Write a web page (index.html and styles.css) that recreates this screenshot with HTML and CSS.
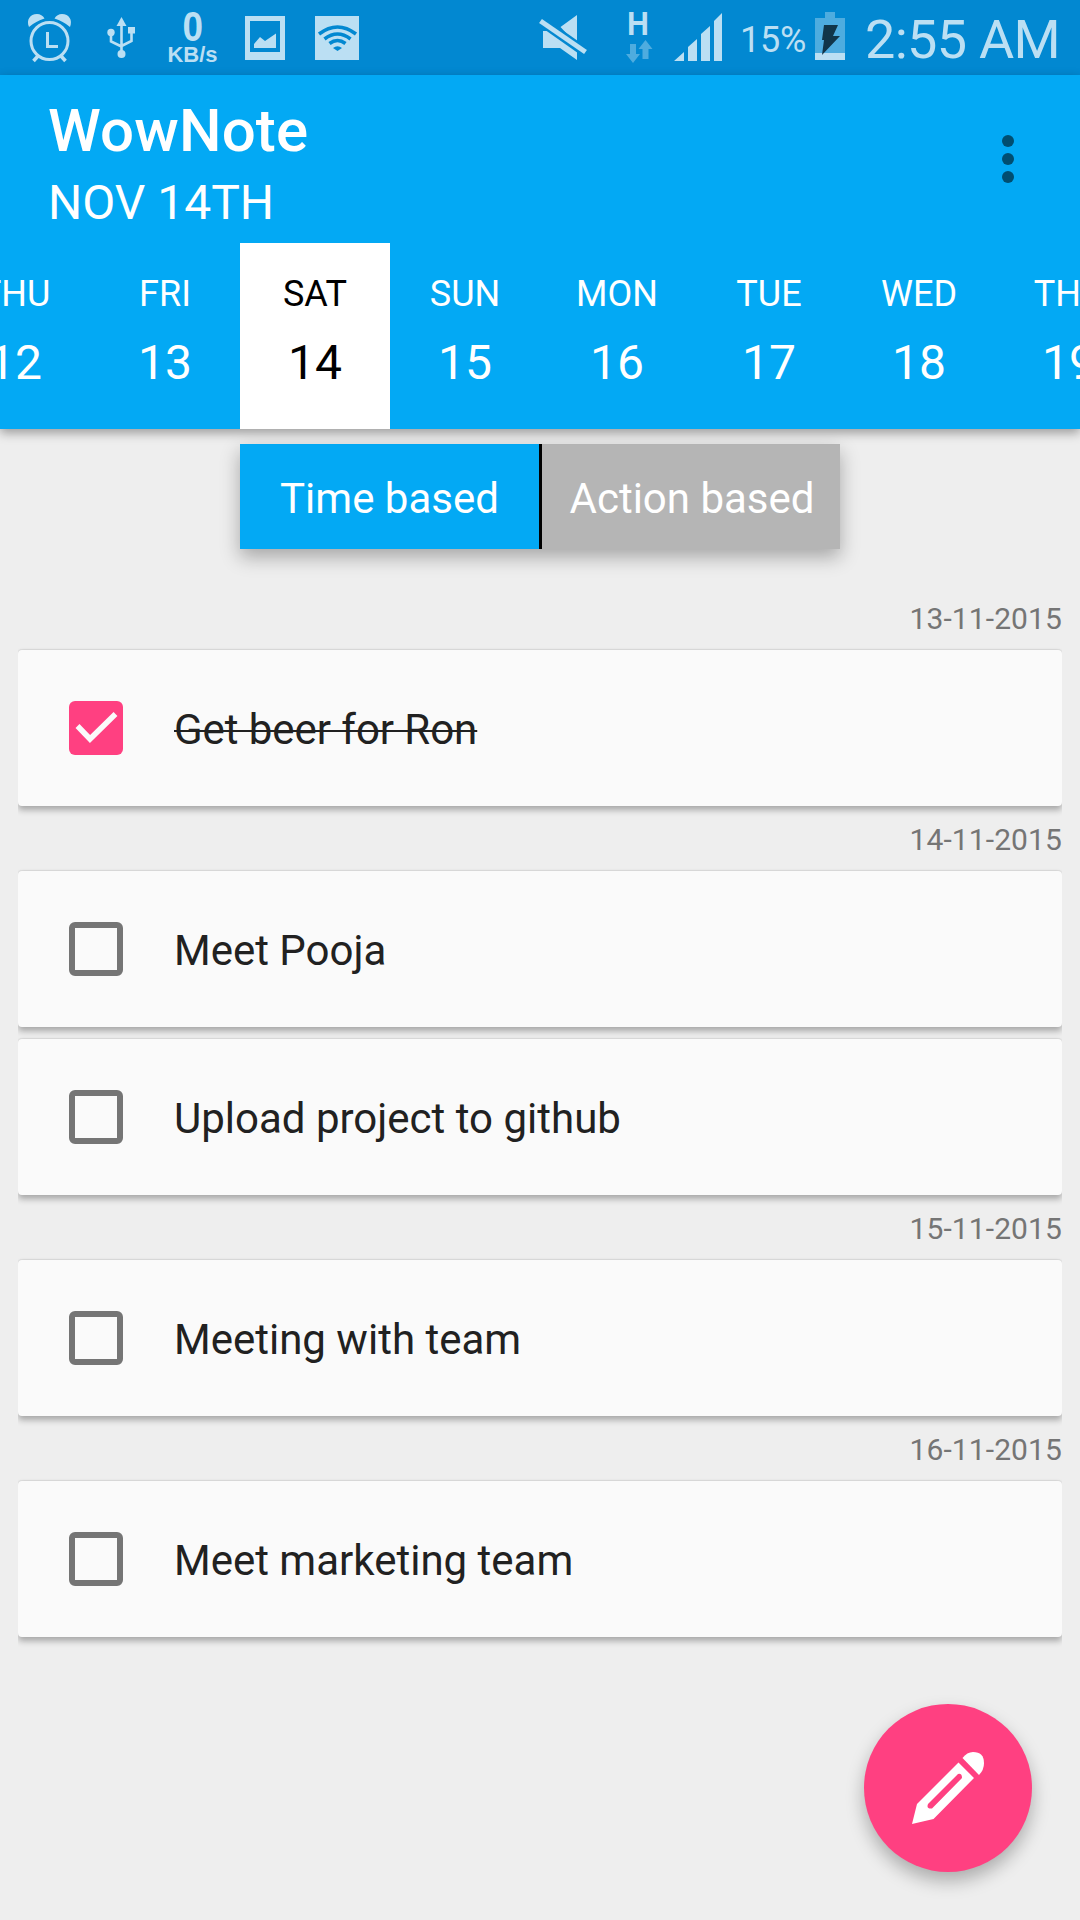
FILE: index.html
```html
<!DOCTYPE html>
<html lang="en">
<head>
<meta charset="utf-8">
<title>WowNote</title>
<link rel="stylesheet" href="styles.css">
</head>
<body>
<div class="status">
  <svg class="status-icons" width="380" height="75" viewBox="0 0 380 75" fill="#bbdff3">
    <!-- alarm -->
    <g fill="none" stroke="#bbdff3" stroke-width="3">
      <circle cx="49.500" cy="41" r="18.500"/>
      <path d="M47.500 32V46.500H58" />
      <path d="M38 56l-4.500 5M61 56l4.500 5" stroke-width="3.600"/>
    </g>
    <path d="M29 27C26 20 30 14 37 14q5 0 7.500 4.500Q36 21 29 27zM70 27C73 20 69 14 62 14q-5 0-7.500 4.500Q63 21 70 27z"/>
    <!-- usb -->
    <path d="M121.500 17l5 9h-10z"/>
    <circle cx="111" cy="32.500" r="3.700"/><circle cx="121.500" cy="54" r="4"/>
    <rect x="128" y="27" width="7" height="6.500"/>
    <path d="M121.500 24V53M111 33v8.500l10.500 5M131.500 32v9l-10 5" fill="none" stroke="#bbdff3" stroke-width="2.600"/>
    <!-- picture -->
    <path fill-rule="evenodd" d="M245 16h40v44h-40zM250 21v31h30V21z"/>
    <path d="M254 48v-4l6-7 5 4 11-7.500V48z"/>
    <!-- wifi -->
    <rect x="315" y="16" width="44" height="44"/>
    <g fill="none" stroke="#0288d1" stroke-width="3.600">
      <path d="M319 34q18.500-14 37 0M324.500 39q13-10 26 0M329.500 43.500q8-6 16 0"/>
    </g>
    <path fill="#0288d1" d="M333 48q4.500-3.500 9 0l-4.500 3z"/>
  </svg>
  <div class="rate"><span class="rate-num">0</span><span class="rate-unit">KB/s</span></div>
  <svg class="status-right" width="210" height="75" viewBox="530 0 210 75" fill="#bbdff3">
    <path d="M577 15v30L560.500 27zM543 31l9 0 25 18v11l-17-12h-17z"/>
    <path d="M541 21l44 31" stroke="#0288d1" stroke-width="10"/>
    <path d="M540.500 21l45 31" stroke="#bbdff3" stroke-width="5"/>
    <path d="M674 61l10-9v9zM688 61V47l9-8v22zM701 61V34l9-8v35zM714 61V21l8-8v48z"/>
    <path fill="#4eacdf" d="M630 44h6v10h4l-7 9-7-9h4zM642.500 59V49h-4l7-9 7 9h-4v10z"/>
  </svg>
  <span class="net">H</span>
  <span class="percent">15%</span>
  <svg class="battery" width="30" height="48" viewBox="815 12 30 48">
    <path fill="#4eacdf" d="M825 12h10v6h10v42h-30V18h10z"/>
    <path fill="#bbdff3" d="M815 53h30v7h-30z"/>
    <path fill="#113549" d="M824 25h14l-5 11h7l-18 19 2-15h-2z"/>
  </svg>
  <span class="clock">2:55 AM</span>
</div>

<header class="appbar">
  <div class="titles">
    <h1>WowNote</h1>
    <p>NOV 14TH</p>
  </div>
  <div class="menu"><i></i><i></i><i></i></div>
  <nav class="days">
    <div class="day"><span>THU</span><b>12</b></div>
    <div class="day"><span>FRI</span><b>13</b></div>
    <div class="day selected"><span>SAT</span><b>14</b></div>
    <div class="day"><span>SUN</span><b>15</b></div>
    <div class="day wide"><span>MON</span><b>16</b></div>
    <div class="day"><span>TUE</span><b>17</b></div>
    <div class="day"><span>WED</span><b>18</b></div>
    <div class="day"><span>THU</span><b>19</b></div>
  </nav>
</header>

<div class="toggle">
  <div class="option active">Time based</div>
  <div class="option">Action based</div>
</div>

<main class="list">
  <div class="date">13-11-2015</div>
  <div class="card done">
    <svg class="check" width="54" height="54" viewBox="0 0 54 54"><rect width="54" height="54" rx="6" fill="#ff4081"/><path d="M8.500 25L21 38 46.500 13" fill="none" stroke="#fafafa" stroke-width="5.500"/></svg>
    <span>Get beer for Ron</span>
  </div>
  <div class="date">14-11-2015</div>
  <div class="card"><i class="box"></i><span>Meet Pooja</span></div>
  <div class="card next"><i class="box"></i><span>Upload project to github</span></div>
  <div class="date">15-11-2015</div>
  <div class="card"><i class="box"></i><span>Meeting with team</span></div>
  <div class="date">16-11-2015</div>
  <div class="card"><i class="box"></i><span>Meet marketing team</span></div>
</main>

<div class="fab">
  <svg width="72" height="72" viewBox="0 0 72 72" fill="#fff">
    <path fill-rule="evenodd" d="M46.500 10.500L62 26 21.500 67 0 72 5 52zM46 22L16 52q-2 5 4 4.500L50 26q0-5-4-4z"/>
    <path d="M50.500 6Q55 0 61 0q11 0 11 11 0 7-5 12z"/>
  </svg>
</div>
</body>
</html>
```

FILE: styles.css
```css
* { box-sizing: border-box; margin: 0; padding: 0; }

body {
  width: 1080px;
  height: 1920px;
  overflow: hidden;
  position: relative;
  background: #eeeeee;
  font-family: Roboto, "Liberation Sans", sans-serif;
  color: #212121;
}

/* Status bar */
.status {
  position: relative;
  display: flex;
  height: 75px;
  background: #0288d1;
  color: #bbdff3;
  white-space: nowrap;
}
.status-icons { flex: none; }
.status-right { flex: none; margin-left: 150px; }
.rate {
  position: absolute;
  left: 162px;
  top: 7px;
  width: 61px;
  display: flex;
  flex-direction: column;
  align-items: center;
  font-family: "Liberation Sans", sans-serif;
  font-weight: 700;
}
.rate-num { font-size: 42px; line-height: 40px; transform: scaleX(0.88); }
.rate-unit { font-size: 22px; line-height: 22px; margin-top: -3px; }
.net {
  position: absolute;
  left: 626px;
  top: 7px;
  font: 700 33px/34px "Liberation Sans", sans-serif;
  transform: scaleX(0.92);
}
.percent { width: 66px; font-size: 36px; line-height: 42px; margin-top: 19px; letter-spacing: -0.2px; }
.battery { flex: none; margin: 12px 0 0 9px; }
.clock { font-size: 54px; line-height: 64px; margin: 8px 0 0 20px; letter-spacing: -0.7px; }

/* App bar */
.appbar {
  display: grid;
  grid-template-columns: 1fr 144px;
  grid-template-rows: 168px 186px;
  height: 354px;
  background: #03a9f4;
  color: #fff;
  position: relative;
  box-shadow: 0 4px 10px rgba(0, 0, 0, 0.35);
}
.titles { padding: 21px 0 0 48px; }
.titles h1 { font-size: 60px; line-height: 70px; font-weight: 500; letter-spacing: 0.15px; }
.titles p { font-size: 48px; line-height: 56px; margin-top: 9px; }
.menu {
  display: flex;
  flex-direction: column;
  gap: 6px;
  align-items: center;
  padding-top: 60px;
}
.menu i { width: 12px; height: 12px; border-radius: 50%; background: #014e70; }
.days { grid-column: 1 / 3; display: flex; margin-left: -60px; width: 1140px; overflow: hidden; }
.day {
  flex: none;
  width: 150px;
  display: flex;
  flex-direction: column;
  align-items: center;
  padding-top: 30px;
}
.day.wide { width: 154px; }
.day span { font-size: 36px; line-height: 42px; }
.day b { font-size: 48px; line-height: 56px; font-weight: 400; margin-top: 20px; }
.day.selected { background: #fff; color: #000; }

/* Time / action switch */
.toggle {
  display: flex;
  width: 600px;
  height: 105px;
  margin: 15px auto 0;
  background: #000;
  gap: 3px;
  box-shadow: 0 8px 18px rgba(0, 0, 0, 0.3);
}
.option {
  flex: 1;
  display: flex;
  align-items: center;
  justify-content: center;
  padding: 3px 0 0 2px;
  font-size: 42px;
  color: #fff;
  background: #b5b5b5;
}
.option.active { flex: none; width: 299px; padding-left: 0; background: #03a9f4; }

/* Notes */
.list { padding: 36px 18px 0; }
.date {
  height: 65px;
  padding-top: 16px;
  font-size: 30px;
  line-height: 35px;
  letter-spacing: 0.1px;
  text-align: right;
  color: #757575;
}
.card {
  display: flex;
  align-items: center;
  gap: 51px;
  height: 156px;
  padding-left: 51px;
  border-radius: 4px;
  background: #fafafa;
  font-size: 42px;
  box-shadow: 0 4px 6px rgba(0, 0, 0, 0.3), 0 -1px 1px rgba(0, 0, 0, 0.08);
  clip-path: inset(-3px 0 -12px 0);
}
.card.next { margin-top: 12px; }
.card span { padding-top: 3px; }
.card.done span { text-decoration: line-through; text-decoration-thickness: 2px; letter-spacing: -0.05px; }
.check, .box { flex: none; width: 54px; height: 54px; }
.box { border: 6px solid #757575; border-radius: 6px; }

/* Compose button */
.fab {
  position: absolute;
  left: 864px;
  top: 1704px;
  width: 168px;
  height: 168px;
  display: grid;
  place-items: center;
  border-radius: 50%;
  background: #ff4081;
  box-shadow: 0 9px 18px rgba(0, 0, 0, 0.28);
}
```
